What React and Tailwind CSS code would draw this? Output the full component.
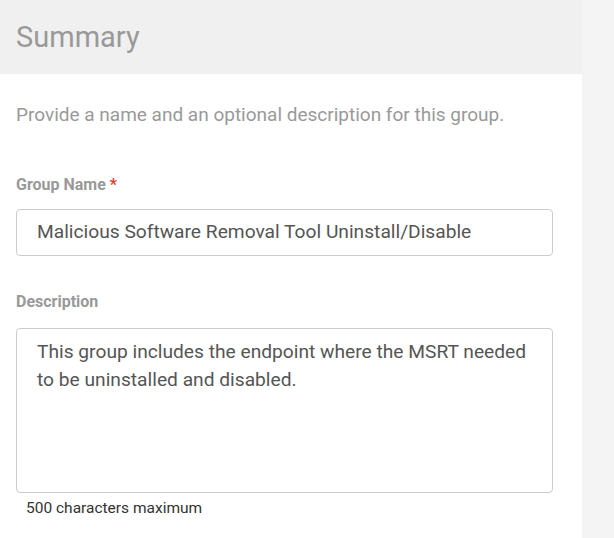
export default function App() {
  return (
    <div className="w-[614px] h-[538px] overflow-hidden flex bg-[#f4f4f4]" style={{ fontFamily: "Roboto, 'Liberation Sans', sans-serif" }}>
      <div className="w-[582px] flex flex-col bg-white">
        <div className="h-[74px] bg-[#f0f0f0] flex items-center px-4">
          <h1 className="text-[29px] text-[#999] font-normal leading-none">Summary</h1>
        </div>
        <div className="px-4 pt-[30px]">
          <p className="text-[19px] text-[#999] leading-[22px]">Provide a name and an optional description for this group.</p>
          <div className="mt-[50px] text-[16px] font-bold text-[#999] leading-[18px]">
            Group Name <span className="text-[#e53935]">*</span>
          </div>
          <div className="mt-[15px] w-[537px] h-[47px] border border-[#ccc] rounded-[4px] flex items-center px-5 text-[19.2px] text-[#555]">
            Malicious Software Removal Tool Uninstall/Disable
          </div>
          <div className="mt-[37px] text-[16px] font-bold text-[#999] leading-[18px]">Description</div>
          <div className="mt-[17px] w-[537px] h-[165px] border border-[#ccc] rounded-[4px] px-5 pt-[9px] text-[19.2px] text-[#555] leading-[28px]">
            This group includes the endpoint where the MSRT needed to be uninstalled and disabled.
          </div>
          <div className="mt-[6px] pl-[10px] text-[15.5px] text-[#333] leading-[18px]">500 characters maximum</div>
        </div>
      </div>
      <div className="flex-1 bg-[#f4f4f4]" />
    </div>
  );
}
